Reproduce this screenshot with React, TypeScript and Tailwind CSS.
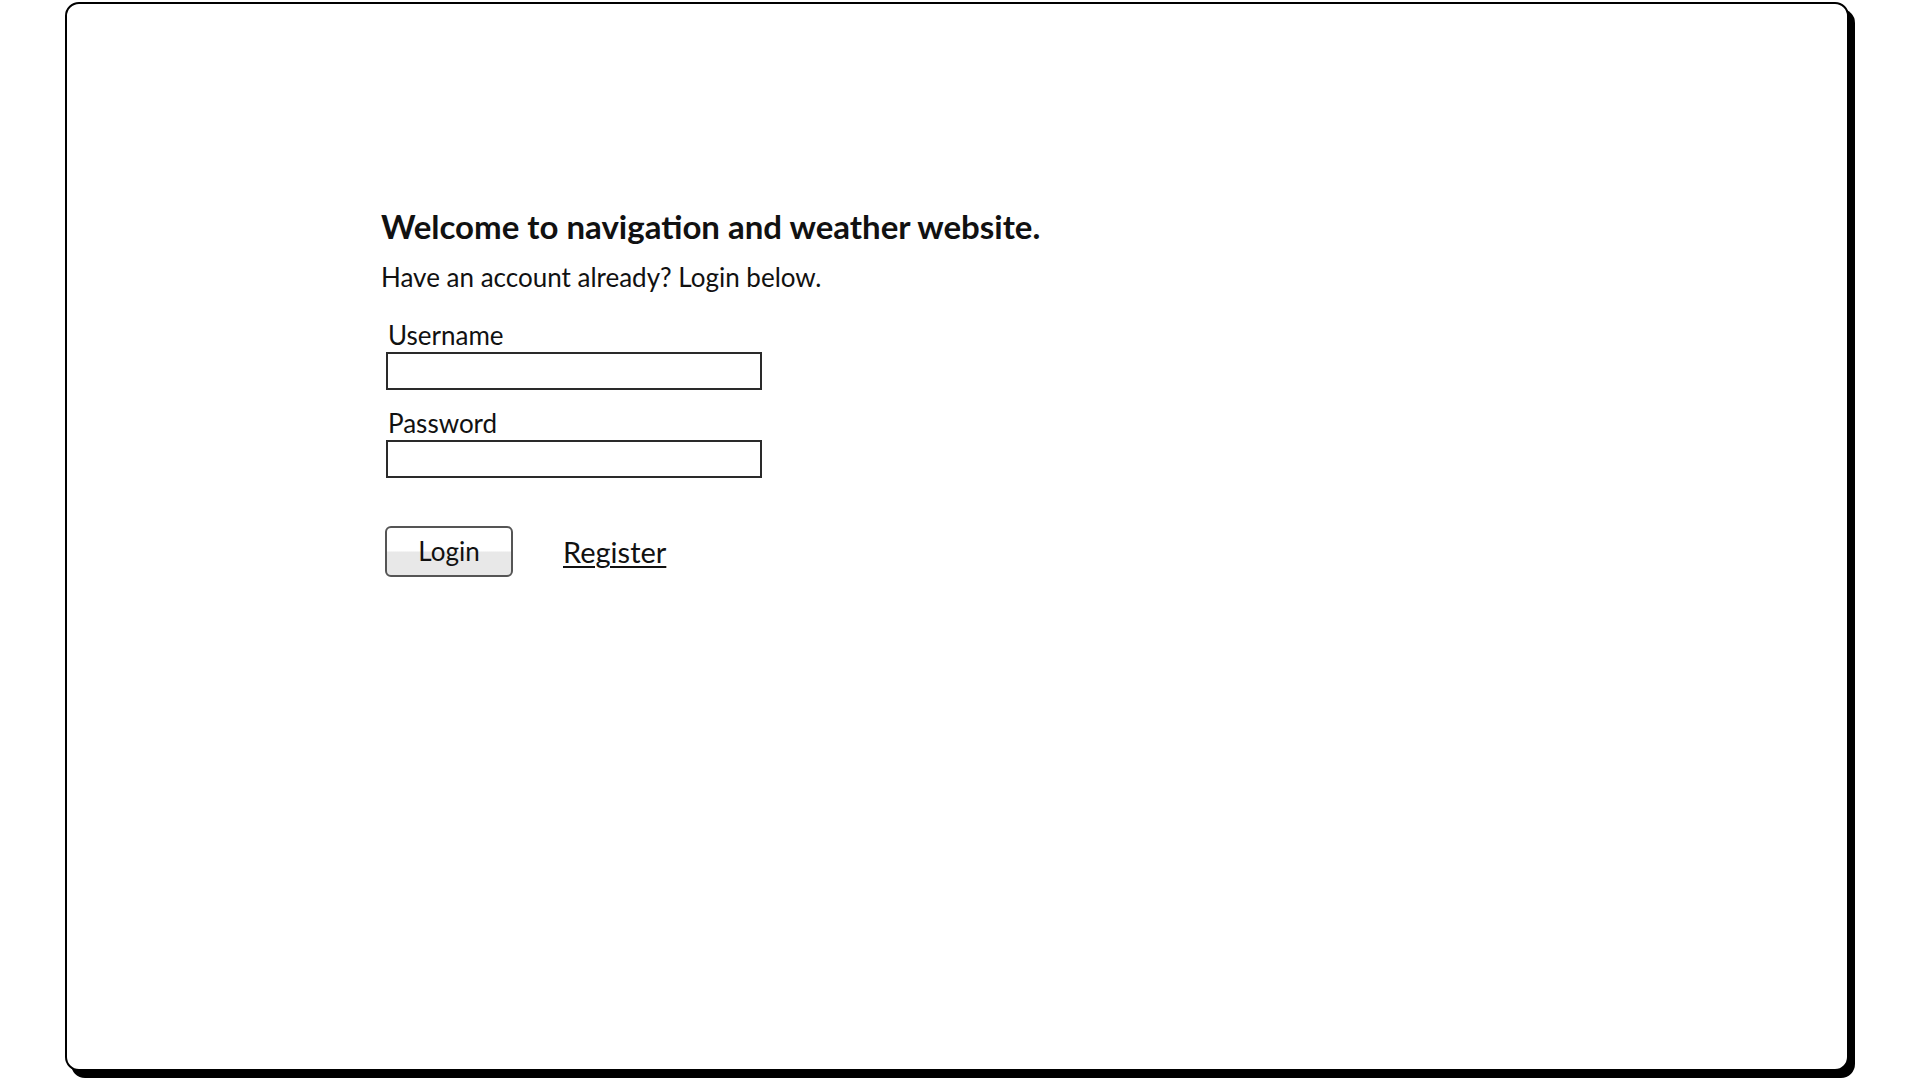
import React from 'react';

const font = { fontFamily: 'Lato, "Open Sans", sans-serif' };

const Field: React.FC<{ label: string; type?: string }> = ({ label, type = 'text' }) => (
  <label className="flex flex-col">
    <span className="pl-[2px] mb-[2px] text-[26px] leading-[30px] text-[#111]">{label}</span>
    <input
      type={type}
      className="w-[376px] h-[38px] border-2 border-[#2a2a2a] bg-white outline-none"
    />
  </label>
);

export default function App() {
  return (
    <div className="w-[1920px] h-[1080px] bg-white pl-[65px] pt-[2px]" style={font}>
      <div className="w-[1784px] h-[1069px] border-2 border-black rounded-[14px] bg-white shadow-[6px_7px_0_0_#000] pl-[314px] pt-[202px]">
        <h1 className="text-[33px] leading-[40px] font-bold text-[#111]">
          Welcome to navigation and weather website.
        </h1>
        <p className="mt-[15px] text-[26px] leading-[32px] text-[#111]">
          Have an account already? Login below.
        </p>
        <div className="mt-[27px] ml-[5px] flex flex-col gap-[18px]">
          <Field label="Username" />
          <Field label="Password" type="password" />
        </div>
        <div className="mt-[48px] ml-[4px] flex items-center gap-[50px]">
          <button className="w-[128px] h-[51px] rounded-[6px] border-2 border-[#555] bg-[linear-gradient(to_bottom,#ffffff_0%,#ffffff_48%,#e8e8e8_52%,#e8e8e8_100%)] text-[26px] text-[#111]">
            Login
          </button>
          <a href="#" className="text-[29px] text-[#111] underline underline-offset-[3px] decoration-[2px]">
            Register
          </a>
        </div>
      </div>
    </div>
  );
}
